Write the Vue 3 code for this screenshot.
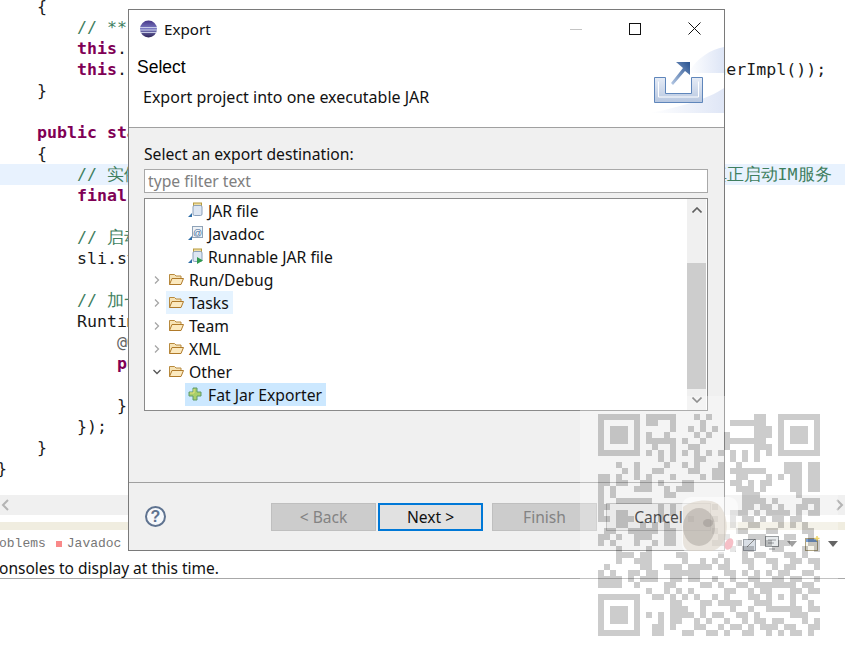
<script setup>
const code = [
  [['p', '    {']],
  [['c', '        // ** 设置事件回调']],
  [['k', '        this'], ['p', '.imServerHandler.setServerMessageQoS(qos);']],
  [['k', '        this'], ['p', '.imServerHandler.setServerEventListener(new ServerEventListenerImpl());']],
  [['p', '    }']],
  [['p', ' ']],
  [['k', '    public static'], ['p', ' void main(String[] args) throws Exception']],
  [['p', '    {']],
  [['c', '        // 实例化服务端监听器并启动它以及（ServerLauncherImpl.startup) 后才会真正启动IM服务']],
  [['k', '        final'], ['p', ' ServerLauncherImpl sli = new ServerLauncherImpl();']],
  [['p', ' ']],
  [['c', '        // 启动服务端']],
  [['p', '        sli.startup();']],
  [['p', ' ']],
  [['c', '        // 加一个钩子']],
  [['p', '        Runtime.getRuntime().addShutdownHook(new Thread() {']],
  [['a', '            @Override']],
  [['k', '            public'], ['p', ' void run() {']],
  [['p', ' ']],
  [['p', '            }']],
  [['p', '        });']],
  [['p', '    }']],
  [['p', '}']],
]

const tree = [
  { label: 'JAR file', icon: 'jar', depth: 1 },
  { label: 'Javadoc', icon: 'doc', depth: 1 },
  { label: 'Runnable JAR file', icon: 'run', depth: 1 },
  { label: 'Run/Debug', icon: 'folder', arrow: 'right' },
  { label: 'Tasks', icon: 'folder', arrow: 'right', state: 'hover' },
  { label: 'Team', icon: 'folder', arrow: 'right' },
  { label: 'XML', icon: 'folder', arrow: 'right' },
  { label: 'Other', icon: 'folder', arrow: 'down' },
  { label: 'Fat Jar Exporter', icon: 'plus', depth: 1, state: 'selected' },
]

const rows = [
  '1111111011111000101000000011001111111',
  '1000001011001000010000111111001000001',
  '1011101000001001010100000011101011101',
  '1011101010010000101001000011101011101',
  '1011101011111010010001111111001011101',
  '1000001001001001100001000011101000001',
  '1111111010101010101010101010101111111',
  '0000000000101000110000101010000000000',
  '0001001000010010100010010000000111011',
  '0000101001100001100110111111000111011',
  '1101001010001000010110011000101011011',
  '1101100110100011000000110101100011011',
  '1010001110010111000000011101000011011',
  '1010000000011000000000001110000001000',
  '1001111110000000000000001111010000111',
  '1100000000101000000100001101101001101',
  '1001100000101000000000111010111101011',
  '1101110000100001000100101101011011000',
  '0001100101010000000000100110001010100',
  '0110011111011000000100011000110000110',
  '1101001110011000000011000111000110010',
  '1010001001011000000110010001101100011',
  '0001000010000000000000101100011000101',
  '0001110110000110000010001011000110100',
  '0001001110000010010101001100110011011',
  '0100000110011101111011000100010110001',
  '1010011011001111100001101010101100110',
  '1111010111001101100100100110011011001',
  '1111001000011000011010011011111110110',
  '0000000010010101000001100101100011011',
  '1111111001101010100101000110101010100',
  '1000001000001100011011110011100010010',
  '1011101000001110010000100100111111011',
  '1011101010101111010110011010000011100',
  '1011101000101100101001001011011000101',
  '1000001001101000110010110101110110011',
  '1111111001100011001101001100101011010',
]

const qrPath = rows
  .map((row, y) => {
    let d = ''
    for (let x = 0; x < row.length; x++) {
      if (row[x] === '1') d += `M${x * 6} ${y * 6}h6v6h-6z`
    }
    return d
  })
  .join('')
</script>

<template>
  <div class="screen">
    <pre class="code"><code v-for="(line, i) in code" :key="i" class="line" :class="{ current: i === 8 }"><span v-for="(part, j) in line" :key="j" :class="'t-' + part[0]">{{ part[1] }}</span></code></pre>

    <div class="hbar">
      <svg width="10" height="12" viewBox="0 0 10 12"><path d="M8 1 3 6l5 5" fill="none" stroke="#b4b4b4" stroke-width="2" /></svg>
      <svg width="10" height="12" viewBox="0 0 10 12"><path d="M2 1l5 5-5 5" fill="none" stroke="#b4b4b4" stroke-width="2" /></svg>
    </div>
    <div class="band"></div>
    <div class="tabs">
      <span class="tab">oblems</span>
      <i class="tab-mark"></i>
      <span class="tab">Javadoc</span>
      <div class="tools">
        <svg width="14" height="14" viewBox="0 0 14 14"><rect x=".5" y="2.500" width="12" height="11" fill="#c9d2dc" stroke="#78808a" /><path d="M4 10 12 2" stroke="#555" /></svg>
        <svg width="14" height="15" viewBox="0 0 14 15"><rect x=".5" y=".5" width="13" height="10" fill="#dfe3e6" stroke="#6d7378" /><path d="M3 4h8M3 7h6M4 13h6" stroke="#6d7378" /></svg>
        <svg width="10" height="6" viewBox="0 0 10 6"><path d="M0 0h10L5 6z" fill="#777" /></svg>
        <svg width="15" height="15" viewBox="0 0 15 15"><rect x=".5" y="2.500" width="12" height="12" fill="#f5f3e4" stroke="#8a7a4a" /><rect x="1" y="3" width="11" height="3" fill="#3f74c0" /><path d="M12 0v5M9.500 2.500h5" stroke="#e8c227" stroke-width="1.500" /></svg>
        <svg width="10" height="6" viewBox="0 0 10 6"><path d="M0 0h10L5 6z" fill="#222" /></svg>
      </div>
    </div>
    <div class="console">onsoles to display at this time.</div>

    <section class="dialog">
      <header class="titlebar">
        <svg class="logo" width="19" height="18" viewBox="0 0 19 18">
          <defs>
            <linearGradient id="eclipse" x1="0" y1="0" x2="0" y2="1">
              <stop offset="0" stop-color="#473788" />
              <stop offset=".5" stop-color="#7d7dc4" />
              <stop offset="1" stop-color="#2c2255" />
            </linearGradient>
          </defs>
          <circle cx="9.500" cy="9" r="8.500" fill="url(#eclipse)" />
          <path d="M1 7.500h17M1 10h17M2 12.500h15" stroke="#dfe4f5" stroke-width=".8" />
        </svg>
        <span class="title">Export</span>
        <div class="winbtns">
          <svg width="12" height="12" viewBox="0 0 12 12"><path d="M0 6.500h12" stroke="#c4c4c4" /></svg>
          <svg width="12" height="12" viewBox="0 0 12 12"><rect x=".5" y=".5" width="11" height="11" fill="none" stroke="#111" /></svg>
          <svg width="13" height="13" viewBox="0 0 13 13"><path d="M.5.500l12 12M12.500.500l-12 12" stroke="#111" /></svg>
        </div>
      </header>

      <div class="banner">
        <div class="banner-text">
          <h1>Select</h1>
          <p>Export project into one executable JAR</p>
        </div>
        <svg class="banner-art" width="74" height="66" viewBox="0 0 74 66">
          <defs>
            <linearGradient id="sw" x1="0" y1="0" x2="1" y2="0">
              <stop offset="0" stop-color="#fff" />
              <stop offset="1" stop-color="#dde5f6" />
            </linearGradient>
            <linearGradient id="sw2" x1="0" y1="0" x2="1" y2="0">
              <stop offset="0" stop-color="#fff" />
              <stop offset="1" stop-color="#dfe6f6" />
            </linearGradient>
            <linearGradient id="tray" x1="0" y1="0" x2="0" y2="1">
              <stop offset="0" stop-color="#e6ecf6" />
              <stop offset="1" stop-color="#b7c7e0" />
            </linearGradient>
            <linearGradient id="arrow" x1="0" y1="1" x2="1" y2="0">
              <stop offset="0" stop-color="#b8cbe6" />
              <stop offset="1" stop-color="#27518f" />
            </linearGradient>
          </defs>
          <path d="M74 0C60 3 48 10 38 26h36z" fill="url(#sw)" />
          <path d="M0 66C30 60 58 52 74 41v25z" fill="url(#sw2)" />
          <path d="M21 36 33 21l-7-6h14v13l-5-4-12 14z" fill="url(#arrow)" />
          <path d="M4.500 30.500h11v16h26v-16h11v25h-48z" fill="url(#tray)" stroke="#5f86bb" />
          <path d="M8.500 34.500v15.500h40v-15.500" fill="none" stroke="#fff" />
        </svg>
      </div>

      <div class="body">
        <label class="dest">Select an export destination:</label>
        <input class="filter" type="text" placeholder="type filter text" />
        <div class="tree">
          <ul class="tree-list">
            <li v-for="item in tree" :key="item.label" class="node" :class="{ nested: item.depth }">
              <svg v-if="item.arrow" class="twist" width="8" height="8" viewBox="0 0 8 8">
                <path v-if="item.arrow === 'right'" d="M2 .5 5.500 4 2 7.500" fill="none" stroke="#a6a6a6" stroke-width="1.300" />
                <path v-else d="M.5 2 4 5.500 7.500 2" fill="none" stroke="#555" stroke-width="1.300" />
              </svg>
              <div class="cell" :class="item.state">
                <svg class="ico" width="17" height="17" viewBox="0 0 17 17">
                  <g v-if="item.icon === 'folder'">
                    <path d="M1.500 13.500v-10h5l1.500 1.500h5v2" fill="#f6e3b6" stroke="#b88a3e" />
                    <path d="M1.500 13.500 4 7.500h11.500l-2.500 6z" fill="#fbe9bf" stroke="#b07a2a" />
                  </g>
                  <g v-else-if="item.icon === 'plus'">
                    <path d="M6 2h4v4h4v4h-4v4H6v-4H2V6h4z" fill="#a9cf6a" stroke="#5f9a6a" />
                    <path d="M7 3v4H3" fill="none" stroke="#e7e27e" />
                  </g>
                  <g v-else-if="item.icon === 'doc'">
                    <rect x="5.500" y="1.500" width="10" height="11" fill="#eef2f6" stroke="#8fa3b8" />
                    <text x="10.500" y="10.500" text-anchor="middle" class="at">@</text>
                    <path d="M1 15h4v-4z" fill="#2f6ea8" />
                  </g>
                  <g v-else>
                    <rect x="6.500" y="1" width="8" height="2.500" fill="#efe0a6" stroke="#b89a3e" />
                    <rect x="6" y="3.500" width="9" height="10" rx="1.500" fill="#dde6f2" stroke="#8ba0bb" />
                    <path d="M1 15h4v-4z" fill="#2f6ea8" />
                    <path v-if="item.icon === 'run'" d="M10 9l6 3.500-6 3.500z" fill="#2f9b4e" />
                  </g>
                </svg>
                <span>{{ item.label }}</span>
              </div>
            </li>
          </ul>
          <div class="vbar">
            <button class="vbtn" type="button" aria-label="Up"><svg width="10" height="6" viewBox="0 0 10 6"><path d="M.5 5.500 5 1l4.500 4.500" fill="none" stroke="#606060" stroke-width="1.600" /></svg></button>
            <div class="track"><div class="thumb"></div></div>
            <button class="vbtn" type="button" aria-label="Down"><svg width="10" height="6" viewBox="0 0 10 6"><path d="M.5.500 5 5 9.500.5" fill="none" stroke="#606060" stroke-width="1.600" /></svg></button>
          </div>
        </div>
      </div>

      <footer class="footer">
        <span class="help">?</span>
        <button class="btn disabled" type="button">&lt; Back</button>
        <button class="btn primary" type="button">Next &gt;</button>
        <button class="btn disabled finish" type="button">Finish</button>
        <button class="btn cancel" type="button">Cancel</button>
      </footer>
    </section>

    <div class="qr">
      <svg class="qr-code" width="222" height="222" viewBox="0 0 222 222"><path :d="qrPath" fill="#000" fill-opacity=".2" /></svg>
      <svg class="pug" width="56" height="57" viewBox="0 0 56 57">
        <rect width="56" height="57" rx="9" fill="#fff" fill-opacity=".5" />
        <path d="M1 10C10 3 28 1 36 7c8 7 10 20 8 30-1 8-6 15-14 17H8c-5-1-7-5-7-10z" fill="#d8cfc3" fill-opacity=".55" />
        <ellipse cx="17" cy="30" rx="16" ry="19" fill="#77706a" fill-opacity=".28" />
        <ellipse cx="26" cy="26" rx="5" ry="4" fill="#4a4540" fill-opacity=".18" />
        <ellipse cx="47" cy="47" rx="4" ry="6" transform="rotate(25 47 47)" fill="#f4b4bd" fill-opacity=".85" />
      </svg>
    </div>
  </div>
</template>

<style scoped>
.screen {
  position: relative;
  width: 845px;
  height: 660px;
  overflow: hidden;
  background: #fff;
  font-family: "Noto Sans", "Open Sans", sans-serif;
  color: #111;
}
.code {
  margin: -4px 0 0 -3px;
  height: 499px;
  overflow: hidden;
  font: 16.6px/21px "Liberation Mono", "Noto Sans CJK SC", monospace;
}
.line {
  display: block;
  width: 900px;
  height: 21px;
  color: #1a1a1a;
  white-space: pre;
}
.current {
  background: #e8f2fe;
}
.t-k {
  color: #7f0055;
  font-weight: 700;
}
.t-c {
  color: #3f7f5f;
}
.t-a {
  color: #646464;
}
.hbar {
  display: flex;
  align-items: center;
  justify-content: space-between;
  height: 20px;
  background: #f0f0f0;
}
.band {
  height: 8px;
  margin-top: 7px;
  background: #f0ede0;
}
.tabs {
  display: flex;
  align-items: center;
  box-sizing: border-box;
  height: 22px;
  padding-top: 5px;
  font: 13px "Liberation Mono", monospace;
  color: #777;
}
.tab {
  margin-left: -1px;
}
.tab-mark {
  width: 6px;
  height: 6px;
  margin: 0 6px 0 10px;
  background: #f98989;
}
.tools {
  display: flex;
  align-items: center;
  gap: 8px;
  margin-left: auto;
  margin-right: 7px;
}
.console {
  box-sizing: border-box;
  height: 27px;
  padding-top: 6px;
  margin-left: -1px;
  font-size: 15.5px;
  line-height: 20px;
  border-bottom: 1px solid #a8a8a8;
  color: #111;
}
.dialog {
  position: absolute;
  left: 128px;
  top: 9px;
  display: flex;
  flex-direction: column;
  box-sizing: border-box;
  width: 597px;
  height: 542px;
  border: 1px solid #7a7a7a;
  background: #fff;
}
.titlebar {
  display: flex;
  align-items: center;
  height: 37px;
  padding-left: 10px;
  flex: none;
}
.title {
  margin-left: 6px;
  font-size: 15.2px;
}
.winbtns {
  display: flex;
  align-items: center;
  gap: 47px;
  margin-left: auto;
  margin-right: 23px;
}
.banner {
  display: flex;
  justify-content: space-between;
  flex: none;
  height: 81px;
  box-sizing: border-box;
  border-bottom: 1px solid #a0a0a0;
}
.banner-text h1 {
  margin: 9px 0 0 8px;
  font: 400 17.5px/22px "Liberation Sans", sans-serif;
  color: #000;
}
.banner-text p {
  margin: 9px 0 0 14px;
  font-size: 16px;
  line-height: 20px;
}
.banner-art {
  flex: none;
}
.body {
  flex: 1;
  display: flex;
  flex-direction: column;
  padding: 16px 16px 0 15px;
  background: #f0f0f0;
  min-height: 0;
}
.dest {
  font-size: 15.7px;
  line-height: 21px;
}
.filter {
  box-sizing: border-box;
  width: 100%;
  height: 24px;
  margin-top: 4px;
  padding: 0 3px;
  border: 1px solid #a9a9a9;
  font: 15.7px "Noto Sans", sans-serif;
  background: #fff;
  outline: none;
}
.filter::placeholder {
  color: #808080;
  opacity: 1;
}
.tree {
  display: flex;
  box-sizing: border-box;
  height: 213px;
  margin-top: 5px;
  border: 1px solid #8a8a8a;
  background: #fff;
}
.tree-list {
  flex: 1;
  margin: 0;
  padding: 0;
  list-style: none;
}
.node {
  display: flex;
  align-items: center;
  height: 23px;
  padding-left: 8px;
}
.node.nested {
  padding-left: 40px;
}
.twist {
  flex: none;
  margin-right: 5px;
}
.cell {
  display: flex;
  align-items: center;
  gap: 4px;
  height: 23px;
  padding: 0 4px 0 2px;
  font-size: 15.7px;
  white-space: nowrap;
}
.cell.hover {
  background: #e5f3ff;
}
.cell.selected {
  background: #cce8ff;
}
.ico {
  flex: none;
}
.at {
  font: 9px "Liberation Sans", sans-serif;
  fill: #3d6a9a;
}
.vbar {
  display: flex;
  flex-direction: column;
  flex: none;
  width: 19px;
  margin-right: 1px;
  background: #f0f0f0;
}
.vbtn {
  display: flex;
  align-items: center;
  justify-content: center;
  flex: none;
  height: 21px;
  padding: 0;
  border: 0;
  background: #f0f0f0;
}
.track {
  flex: 1;
  padding-top: 43px;
}
.thumb {
  height: 126px;
  background: #cdcdcd;
}
.footer {
  display: flex;
  align-items: center;
  flex: none;
  height: 68px;
  box-sizing: border-box;
  border-top: 1px solid #a0a0a0;
  padding: 1px 12px 0 16px;
  background: #f0f0f0;
}
.help {
  box-sizing: border-box;
  width: 21px;
  height: 21px;
  margin-top: -2px;
  border: 2px solid #5f7390;
  border-radius: 50%;
  background: #f6f8fb;
  color: #5f7390;
  font: 700 16px/17px "Liberation Sans", sans-serif;
  text-align: center;
}
.btn {
  box-sizing: border-box;
  width: 105px;
  height: 28px;
  padding: 0;
  border: 1px solid #adadad;
  background: #e1e1e1;
  font: 15.6px "Noto Sans", sans-serif;
  color: #111;
}
.disabled {
  margin-left: 105px;
  border-color: #bfbfbf;
  background: #cccccc;
  color: #838383;
}
.primary {
  margin-left: 2px;
  border: 2px solid #0078d7;
}
.finish {
  margin-left: 9px;
}
.cancel {
  margin-left: 9px;
  color: #000;
}
.qr {
  position: absolute;
  left: 580px;
  top: 396px;
  width: 258px;
  height: 258px;
  background: rgba(255, 255, 255, 0.3);
  pointer-events: none;
}
.qr-code {
  position: absolute;
  left: 18px;
  top: 18px;
}
.pug {
  position: absolute;
  left: 102px;
  top: 101px;
}
</style>

<style>
html,
body {
  margin: 0;
  overflow: hidden;
  background: #fff;
}
</style>
